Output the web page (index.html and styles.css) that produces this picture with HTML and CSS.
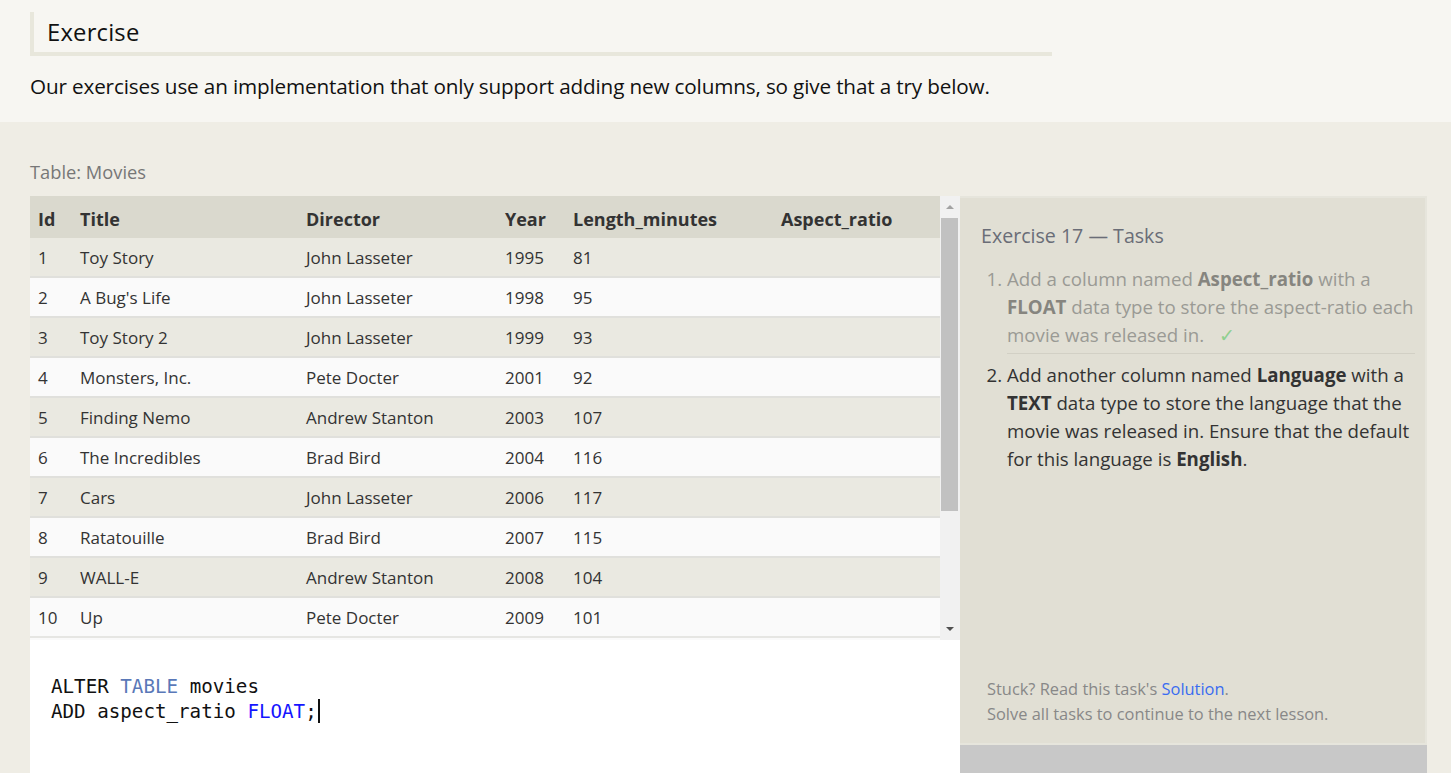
FILE: index.html
```html
<!DOCTYPE html>
<html>
<head>
<meta charset="utf-8">
<link rel="stylesheet" href="styles.css">
</head>
<body>
<section class="intro">
  <div class="heading"><h2>Exercise</h2></div>
  <p class="lead">Our exercises use an implementation that only support adding new columns, so give that a try below.</p>
</section>
<section class="exercise">
  <div class="caption">Table: Movies</div>
  <div class="workspace">
    <div class="left">
      <div class="table-wrap">
        <table class="movies">
          <thead>
            <tr><th class="c-id">Id</th><th class="c-title">Title</th><th class="c-dir">Director</th><th class="c-year">Year</th><th class="c-len">Length_minutes</th><th class="c-asp">Aspect_ratio</th></tr>
          </thead>
          <tbody>
            <tr><td>1</td><td>Toy Story</td><td>John Lasseter</td><td>1995</td><td>81</td><td></td></tr>
            <tr><td>2</td><td>A Bug's Life</td><td>John Lasseter</td><td>1998</td><td>95</td><td></td></tr>
            <tr><td>3</td><td>Toy Story 2</td><td>John Lasseter</td><td>1999</td><td>93</td><td></td></tr>
            <tr><td>4</td><td>Monsters, Inc.</td><td>Pete Docter</td><td>2001</td><td>92</td><td></td></tr>
            <tr><td>5</td><td>Finding Nemo</td><td>Andrew Stanton</td><td>2003</td><td>107</td><td></td></tr>
            <tr><td>6</td><td>The Incredibles</td><td>Brad Bird</td><td>2004</td><td>116</td><td></td></tr>
            <tr><td>7</td><td>Cars</td><td>John Lasseter</td><td>2006</td><td>117</td><td></td></tr>
            <tr><td>8</td><td>Ratatouille</td><td>Brad Bird</td><td>2007</td><td>115</td><td></td></tr>
            <tr><td>9</td><td>WALL-E</td><td>Andrew Stanton</td><td>2008</td><td>104</td><td></td></tr>
            <tr><td>10</td><td>Up</td><td>Pete Docter</td><td>2009</td><td>101</td><td></td></tr>
          </tbody>
        </table>
        <div class="scrollbar">
          <div class="arrow up"></div>
          <div class="thumb-track"><div class="thumb"></div></div>
          <div class="arrow down"></div>
        </div>
      </div>
      <div class="editor">
        <div class="code-line">ALTER <span class="kw">TABLE</span> movies</div>
        <div class="code-line">ADD aspect_ratio <span class="type">FLOAT</span>;<span class="cursor"></span></div>
      </div>
    </div>
    <div class="right">
      <div class="tasks">
        <h3 class="tasks-title">Exercise 17 — Tasks</h3>
        <ol class="task-list">
          <li class="done">Add a column named <b>Aspect_ratio</b> with a <b>FLOAT</b> data type to store the aspect-ratio each movie was released in. <span class="check">✓</span></li>
          <li>Add another column named <b>Language</b> with a <b>TEXT</b> data type to store the language that the movie was released in. Ensure that the default for this language is <b>English</b>.</li>
        </ol>
        <div class="help">
          <div>Stuck? Read this task's <a href="#" class="link">Solution</a>.</div>
          <div>Solve all tasks to continue to the next lesson.</div>
        </div>
      </div>
      <div class="footer-btn"></div>
    </div>
  </div>
</section>
</body>
</html>
```
FILE: styles.css
```css
html, body {
  margin: 0;
  padding: 0;
  height: 100%;
  overflow: hidden;
}
body {
  font-family: "Open Sans", "Noto Sans", sans-serif;
  background: #efede5;
  color: #222;
}
.intro {
  background: #f7f6f2;
  padding: 12px 30px 0 30px;
  height: 110px;
}
.heading {
  width: 1018px;
  border-left: 4px solid #e8e7dc;
  border-bottom: 4px solid #e8e7dc;
  height: 40px;
  display: flex;
  align-items: center;
}
.heading h2 {
  margin: 0 0 0 13px;
  font-weight: 400;
  font-size: 23.8px;
  color: #111;
  letter-spacing: 0.2px;
}
.lead {
  margin: 16px 0 0 0;
  font-size: 20.7px;
  color: #111;
  letter-spacing: -0.15px;
}
.exercise {
  padding: 38px 24px 0 30px;
}
.caption {
  font-size: 18.3px;
  color: #777;
  height: 24px;
  line-height: 24px;
  margin-bottom: 12px;
}
.workspace {
  display: flex;
  align-items: flex-start;
}
.left {
  width: 930px;
  display: flex;
  flex-direction: column;
}
.table-wrap {
  display: flex;
  height: 444px;
  background: #fafafa;
}
.movies {
  width: 910px;
  border-collapse: collapse;
  table-layout: fixed;
  font-size: 17px;
  color: #333;
  align-self: flex-start;
}
.movies th {
  background: #dad9ce;
  height: 39px;
  text-align: left;
  font-weight: 700;
  font-size: 18px;
  padding: 3px 0 0 8px;
  color: #333;
}
.movies td {
  height: 38px;
  padding: 0 0 0 8px;
  border-bottom: 2px solid #e0e0dc;
  white-space: nowrap;
}
.movies tbody tr:nth-child(odd) { background: #eae9e1; }
.movies tbody tr:nth-child(even) { background: #fafafa; }
.movies tbody tr:last-child td { border-bottom: 2px solid #e6e6e3; }
.c-id { width: 34px; }
.c-title { width: 218px; }
.c-dir { width: 191px; }
.c-year { width: 60px; }
.c-len { width: 200px; }
.c-asp { width: auto; }
.scrollbar {
  width: 20px;
  background: #f1f1f1;
  display: flex;
  flex-direction: column;
}
.arrow {
  height: 22px;
  display: flex;
  align-items: center;
  justify-content: center;
}
.arrow.up::before {
  content: "";
  border-left: 4px solid transparent;
  border-right: 4px solid transparent;
  border-bottom: 4px solid #a3a3a3;
}
.arrow.down::before {
  content: "";
  border-left: 4px solid transparent;
  border-right: 4px solid transparent;
  border-top: 4px solid #505050;
}
.thumb-track {
  flex: 1;
  padding: 0 2px 0 1px;
}
.thumb {
  height: 293px;
  background: #c1c1c1;
}
.editor {
  background: #fff;
  height: 140px;
  padding: 35px 0 0 21px;
  font-family: "DejaVu Sans Mono", "Liberation Mono", monospace;
  font-size: 19.2px;
  line-height: 24px;
  color: #111;
}
.kw { color: #5a78b8; }
.type { color: #1515ff; }
.cursor {
  display: inline-block;
  width: 2px;
  height: 24px;
  background: #111;
  vertical-align: -5px;
  margin-left: 1px;
}
.right {
  width: 467px;
  display: flex;
  flex-direction: column;
}
.tasks {
  background: #e1dfd4;
  border: 2px solid #e6e5dc;
  border-left: none;
  height: 545px;
  padding: 0 10px 0 21px;
  display: flex;
  flex-direction: column;
}
.tasks-title {
  margin: 24px 0 0 0;
  font-weight: 400;
  font-size: 19.6px;
  color: #6a6d77;
  line-height: 28px;
}
.task-list {
  margin: 15px 0 0 0;
  padding: 0 0 0 26px;
  font-size: 18.7px;
  line-height: 28px;
  color: #333;
}
.task-list li {
  padding-left: 0;
}
.task-list li.done {
  color: #9a9a94;
  border-bottom: 1px solid #d2d0c5;
  padding-bottom: 4px;
  margin-bottom: 7px;
}
.task-list li.done b { color: #86857f; }
.check {
  color: #8fcf8f;
  margin-left: 10px;
}
.help {
  margin-top: auto;
  margin-bottom: 17px;
  font-size: 16.4px;
  line-height: 25px;
  color: #888;
  padding-left: 6px;
}
.link {
  color: #3a6cf0;
  text-decoration: none;
}
.footer-btn {
  height: 40px;
  background: #c8c8c8;
}
```
